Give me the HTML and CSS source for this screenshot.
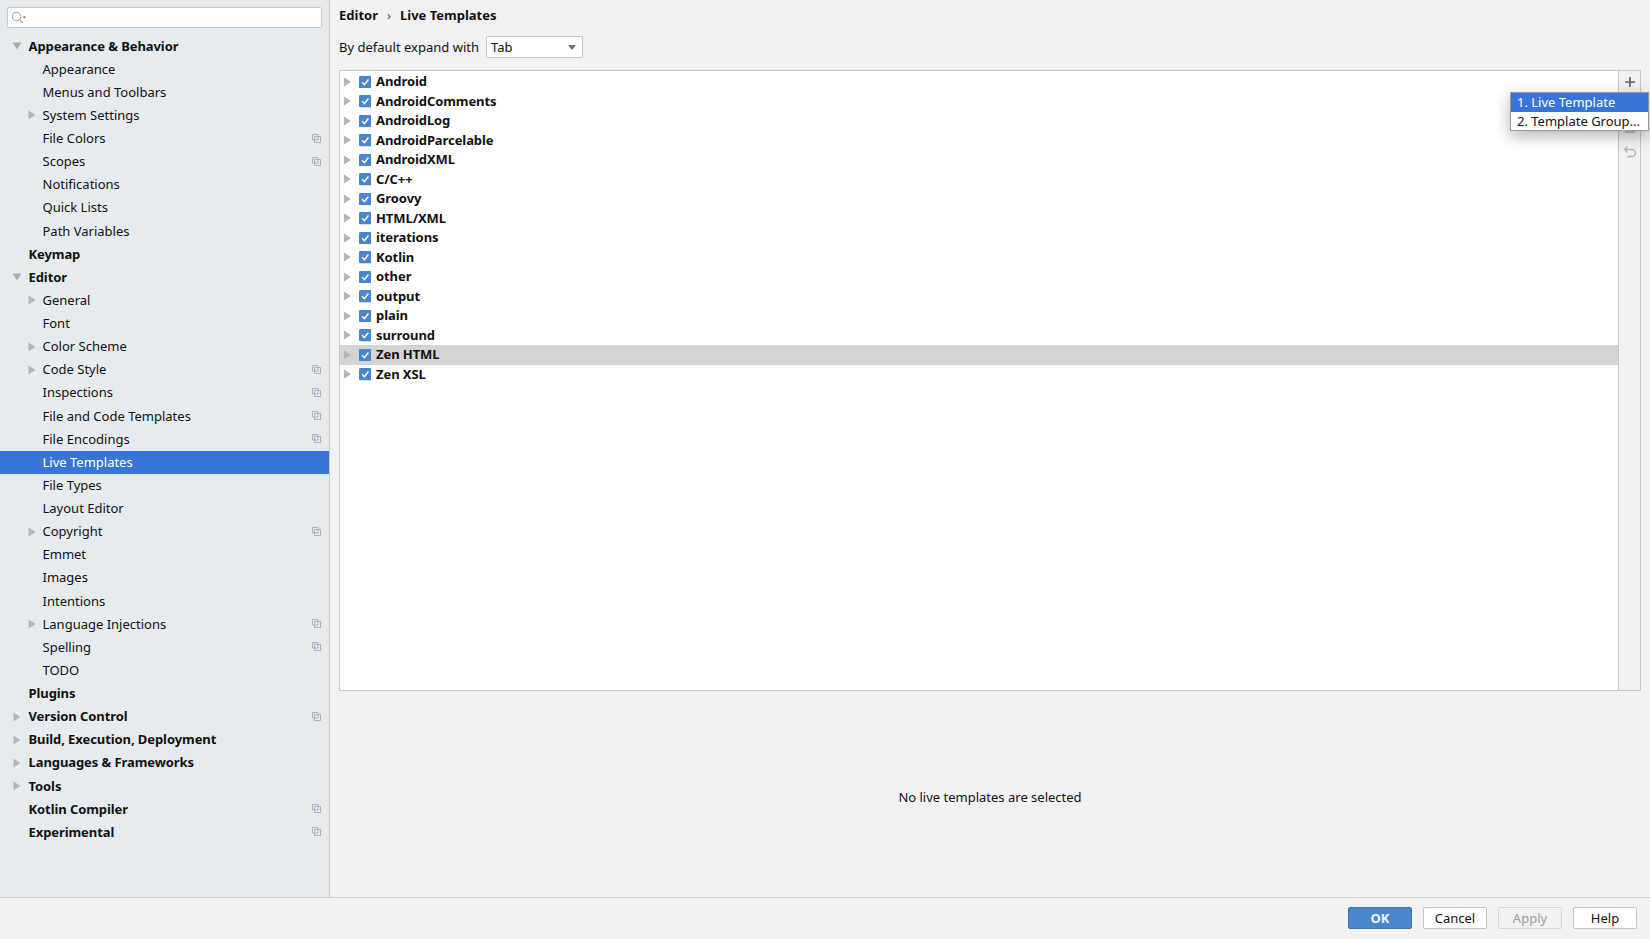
FILE: index.html
```html
<!DOCTYPE html>
<html lang="en">
<head>
<meta charset="utf-8">
<title>Settings</title>
<link rel="stylesheet" href="styles.css">
</head>
<body>
<svg class="defs" width="0" height="0" aria-hidden="true">
  <symbol id="right" viewBox="0 0 9 10"><path d="M1 0.5 L8 5 L1 9.5 Z" fill="#b3b5b8"/></symbol>
  <symbol id="down" viewBox="0 0 10 9"><path d="M0.5 1 L9.5 1 L5 8 Z" fill="#a9abae"/></symbol>
  <symbol id="copy" viewBox="0 0 9 9"><path d="M0.5 0.5H6V2.5H8.5V8.5H2.5V6H0.5Z M2.5 2.5H6V6H2.5Z" fill="none" stroke="#a9b1b9" stroke-width="1"/></symbol>
  <symbol id="check" viewBox="0 0 13 13"><rect width="13" height="13" rx="1.5" fill="#4a86c9"/><path d="M3.2 6.6 L5.6 9 L9.8 3.6" fill="none" stroke="#fff" stroke-width="1.5"/></symbol>
</svg>
<div class="window">
  <div class="body">
    <aside class="sidebar">
      <div class="search">
        <svg width="16" height="14" viewBox="0 0 16 14"><circle cx="5.5" cy="5.5" r="4.2" fill="none" stroke="#9a9da1" stroke-width="1"/><path d="M8.6 8.6L12 12" stroke="#9a9da1" stroke-width="1.2"/><path d="M11.5 5.5h3.6l-1.8 2z" fill="#70747a"/></svg>
      </div>
      <ul class="nav">
        <li class="row top"><svg class="arrow"><use href="#down"/></svg><span>Appearance &amp; Behavior</span></li>
        <li class="row sub"><span>Appearance</span></li>
        <li class="row sub"><span>Menus and Toolbars</span></li>
        <li class="row sub"><svg class="arrow"><use href="#right"/></svg><span>System Settings</span></li>
        <li class="row sub"><span>File Colors</span><svg class="copy"><use href="#copy"/></svg></li>
        <li class="row sub"><span>Scopes</span><svg class="copy"><use href="#copy"/></svg></li>
        <li class="row sub"><span>Notifications</span></li>
        <li class="row sub"><span>Quick Lists</span></li>
        <li class="row sub"><span>Path Variables</span></li>
        <li class="row top"><span>Keymap</span></li>
        <li class="row top"><svg class="arrow"><use href="#down"/></svg><span>Editor</span></li>
        <li class="row sub"><svg class="arrow"><use href="#right"/></svg><span>General</span></li>
        <li class="row sub"><span>Font</span></li>
        <li class="row sub"><svg class="arrow"><use href="#right"/></svg><span>Color Scheme</span></li>
        <li class="row sub"><svg class="arrow"><use href="#right"/></svg><span>Code Style</span><svg class="copy"><use href="#copy"/></svg></li>
        <li class="row sub"><span>Inspections</span><svg class="copy"><use href="#copy"/></svg></li>
        <li class="row sub"><span>File and Code Templates</span><svg class="copy"><use href="#copy"/></svg></li>
        <li class="row sub"><span>File Encodings</span><svg class="copy"><use href="#copy"/></svg></li>
        <li class="row sub selected"><span>Live Templates</span></li>
        <li class="row sub"><span>File Types</span></li>
        <li class="row sub"><span>Layout Editor</span></li>
        <li class="row sub"><svg class="arrow"><use href="#right"/></svg><span>Copyright</span><svg class="copy"><use href="#copy"/></svg></li>
        <li class="row sub"><span>Emmet</span></li>
        <li class="row sub"><span>Images</span></li>
        <li class="row sub"><span>Intentions</span></li>
        <li class="row sub"><svg class="arrow"><use href="#right"/></svg><span>Language Injections</span><svg class="copy"><use href="#copy"/></svg></li>
        <li class="row sub"><span>Spelling</span><svg class="copy"><use href="#copy"/></svg></li>
        <li class="row sub"><span>TODO</span></li>
        <li class="row top"><span>Plugins</span></li>
        <li class="row top"><svg class="arrow"><use href="#right"/></svg><span>Version Control</span><svg class="copy"><use href="#copy"/></svg></li>
        <li class="row top"><svg class="arrow"><use href="#right"/></svg><span>Build, Execution, Deployment</span></li>
        <li class="row top"><svg class="arrow"><use href="#right"/></svg><span>Languages &amp; Frameworks</span></li>
        <li class="row top"><svg class="arrow"><use href="#right"/></svg><span>Tools</span></li>
        <li class="row top"><span>Kotlin Compiler</span><svg class="copy"><use href="#copy"/></svg></li>
        <li class="row top"><span>Experimental</span><svg class="copy"><use href="#copy"/></svg></li>
      </ul>
    </aside>
    <main class="content">
      <div class="crumbs"><span>Editor</span><span class="sep">›</span><span>Live Templates</span></div>
      <div class="expand">
        <span>By default expand with</span>
        <div class="combo"><span>Tab</span><i class="caret"></i></div>
      </div>
      <div class="panel">
        <ul class="tree">
          <li class="node"><svg class="tw"><use href="#right"/></svg><svg class="cb"><use href="#check"/></svg><span>Android</span></li>
          <li class="node"><svg class="tw"><use href="#right"/></svg><svg class="cb"><use href="#check"/></svg><span>AndroidComments</span></li>
          <li class="node"><svg class="tw"><use href="#right"/></svg><svg class="cb"><use href="#check"/></svg><span>AndroidLog</span></li>
          <li class="node"><svg class="tw"><use href="#right"/></svg><svg class="cb"><use href="#check"/></svg><span>AndroidParcelable</span></li>
          <li class="node"><svg class="tw"><use href="#right"/></svg><svg class="cb"><use href="#check"/></svg><span>AndroidXML</span></li>
          <li class="node"><svg class="tw"><use href="#right"/></svg><svg class="cb"><use href="#check"/></svg><span>C/C++</span></li>
          <li class="node"><svg class="tw"><use href="#right"/></svg><svg class="cb"><use href="#check"/></svg><span>Groovy</span></li>
          <li class="node"><svg class="tw"><use href="#right"/></svg><svg class="cb"><use href="#check"/></svg><span>HTML/XML</span></li>
          <li class="node"><svg class="tw"><use href="#right"/></svg><svg class="cb"><use href="#check"/></svg><span>iterations</span></li>
          <li class="node"><svg class="tw"><use href="#right"/></svg><svg class="cb"><use href="#check"/></svg><span>Kotlin</span></li>
          <li class="node"><svg class="tw"><use href="#right"/></svg><svg class="cb"><use href="#check"/></svg><span>other</span></li>
          <li class="node"><svg class="tw"><use href="#right"/></svg><svg class="cb"><use href="#check"/></svg><span>output</span></li>
          <li class="node"><svg class="tw"><use href="#right"/></svg><svg class="cb"><use href="#check"/></svg><span>plain</span></li>
          <li class="node"><svg class="tw"><use href="#right"/></svg><svg class="cb"><use href="#check"/></svg><span>surround</span></li>
          <li class="node current"><svg class="tw"><use href="#right"/></svg><svg class="cb"><use href="#check"/></svg><span>Zen HTML</span></li>
          <li class="node"><svg class="tw"><use href="#right"/></svg><svg class="cb"><use href="#check"/></svg><span>Zen XSL</span></li>
        </ul>
        <div class="tools">
          <svg class="tool plus" viewBox="0 0 16 16"><path d="M8 3V13M3 8H13" stroke="#5b5f63" stroke-width="1.6" fill="none"/></svg>
          <svg class="tool" viewBox="0 0 16 16"><path d="M3 8H13" stroke="#b5b7b9" stroke-width="1.6" fill="none"/></svg>
          <svg class="tool" viewBox="0 0 16 16"><path d="M3 11H13" stroke="#b5b7b9" stroke-width="1.6" fill="none"/></svg>
          <svg class="tool" viewBox="0 0 16 16"><path d="M3 5.5H10A3.2 3.2 0 0 1 10 12.5H5M5.5 2.5L2.5 5.5L5.5 8.5" stroke="#b5b7b9" stroke-width="1.4" fill="none"/></svg>
        </div>
      </div>
      <div class="empty">No live templates are selected</div>
    </main>
  </div>
  <footer class="footer">
    <button class="btn primary">OK</button>
    <button class="btn">Cancel</button>
    <button class="btn disabled">Apply</button>
    <button class="btn">Help</button>
  </footer>
  <div class="popup">
    <div class="item active">1. Live Template</div>
    <div class="item">2. Template Group...</div>
  </div>
</div>
</body>
</html>
```
FILE: styles.css
```css
* { box-sizing: border-box; }
html, body { margin: 0; padding: 0; }
body {
  width: 1650px;
  height: 939px;
  overflow: hidden;
  font-family: "Noto Sans", "Open Sans", sans-serif;
  font-size: 13px;
  color: #111;
  background: #f2f2f2;
}
.defs { position: absolute; }
ul { list-style: none; margin: 0; padding: 0; }

.window { position: relative; display: flex; flex-direction: column; height: 939px; }
.body { display: flex; height: 897px; }

.sidebar {
  width: 330px;
  flex: none;
  background: #e6ebf0;
  border-right: 1px solid #c8c8c8;
  padding-top: 7px;
}
.search {
  display: flex;
  align-items: center;
  width: 315px;
  height: 21px;
  margin-left: 7px;
  padding-left: 3px;
  background: #fff;
  border: 1px solid #c9cccf;
  border-radius: 2px;
}
.nav { margin-top: 6.5px; }
.row {
  position: relative;
  display: flex;
  align-items: center;
  height: 23.13px;
}
.row span { line-height: 1; }
.top { padding-left: 28.5px; font-weight: 700; letter-spacing: -0.08px; }
.sub { padding-left: 42.5px; }
.selected { background: #3875d7; color: #fff; }
.arrow { position: absolute; width: 10px; height: 10px; top: 6.5px; }
.top .arrow { left: 12px; }
.sub .arrow { left: 27px; }
.copy { position: absolute; right: 8.5px; top: 6.5px; width: 9px; height: 9px; }

.content {
  flex: 1;
  display: flex;
  flex-direction: column;
  padding: 0 9px;
}
.crumbs {
  display: flex;
  align-items: center;
  gap: 9px;
  height: 29px;
  font-weight: 700;
}
.sep { font-weight: 400; color: #555; }
.expand {
  display: flex;
  align-items: center;
  gap: 7px;
  height: 22px;
  margin-top: 7px;
}
.combo {
  display: flex;
  align-items: center;
  justify-content: space-between;
  width: 97px;
  height: 22px;
  padding: 0 6px 0 4px;
  background: #fff;
  border: 1px solid #c6c6c6;
  border-radius: 2px;
}
.caret {
  width: 0;
  height: 0;
  border-left: 4px solid transparent;
  border-right: 4px solid transparent;
  border-top: 5px solid #6e6e6e;
}
.panel {
  display: flex;
  width: 1302px;
  height: 621px;
  margin-top: 12px;
  background: #fff;
  border: 1px solid #c8c8c8;
}
.tree { flex: 1; padding-top: 1px; }
.node {
  display: flex;
  align-items: center;
  height: 19.52px;
  font-weight: 700;
  letter-spacing: -0.08px;
}
.node span { line-height: 1; }
.tw { width: 9px; height: 10px; margin-left: 3px; flex: none; }
.cb { width: 12.5px; height: 12.5px; margin-left: 6.5px; margin-right: 5px; flex: none; }
.current { background: #d4d4d4; }
.tools {
  width: 22px;
  flex: none;
  background: #f2f2f2;
  border-left: 1px solid #c8c8c8;
  display: flex;
  flex-direction: column;
  align-items: center;
  padding-top: 3px;
}
.tool { width: 16px; height: 16px; margin-bottom: 7px; flex: none; }
.plus { margin-bottom: 8px; }
.empty { flex: 1; display: flex; align-items: center; justify-content: center; width: 1302px; padding-top: 5px; }

.footer {
  height: 42px;
  flex: none;
  display: flex;
  justify-content: flex-end;
  align-items: center;
  gap: 11px;
  padding-right: 13px;
  padding-bottom: 2px;
  border-top: 1px solid #d0d0d0;
}
.btn {
  width: 64px;
  height: 22px;
  padding: 0;
  font: inherit;
  color: #111;
  background: #fff;
  border: 1px solid #c4c4c4;
  border-radius: 2px;
}
.primary { background: #4a86c9; border-color: #3f76b5; color: #f2f6fb; font-weight: 700; }
.disabled { background: #f2f2f2; border-color: #d6d6d6; color: #9e9e9e; }

.popup {
  position: absolute;
  left: 1510px;
  top: 92px;
  width: 139px;
  background: #fff;
  border: 1px solid #9a9a9a;
  box-shadow: 0 5px 16px rgba(0, 0, 0, 0.3);
}
.item { height: 18.5px; padding-left: 6px; display: flex; align-items: center; white-space: nowrap; }
.active { background: #3875d7; color: #fff; }
```
